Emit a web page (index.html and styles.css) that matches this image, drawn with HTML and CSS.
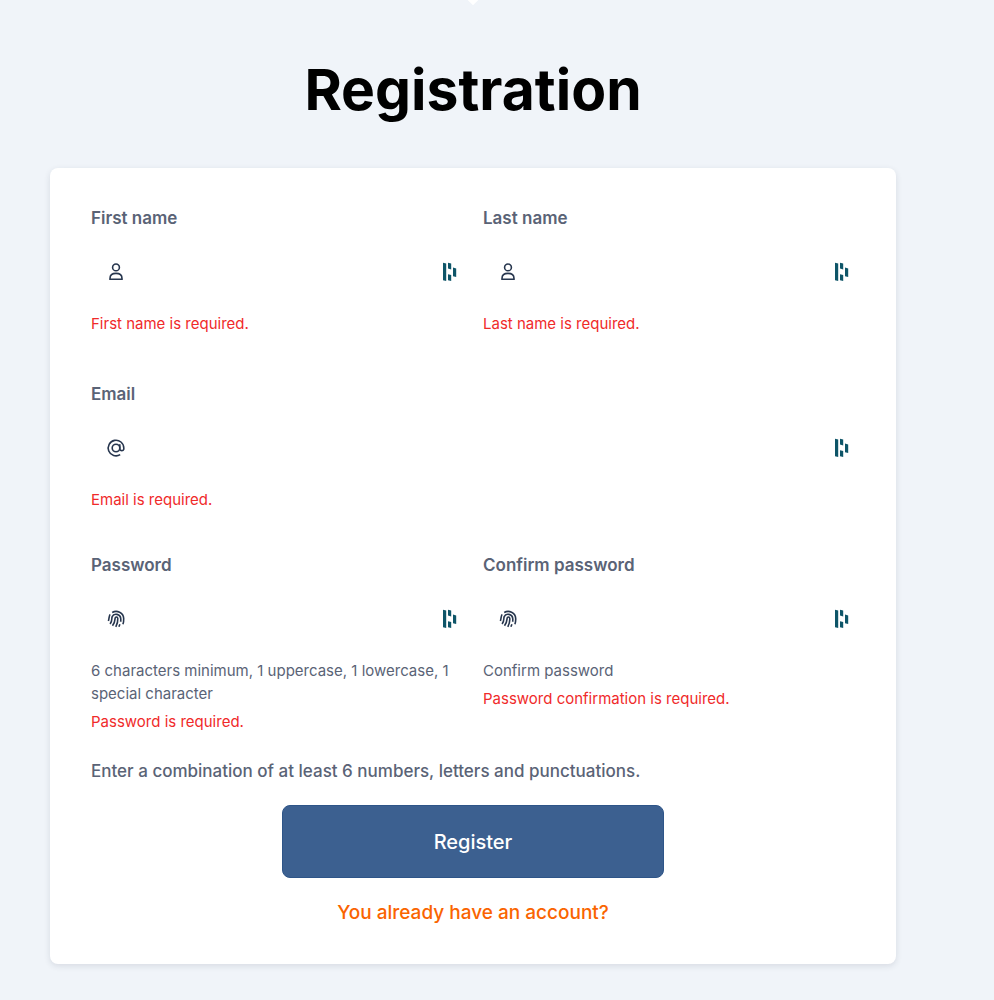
FILE: index.html
```html
<!DOCTYPE html>
<html lang="en">
<head>
<meta charset="utf-8">
<meta name="viewport" content="width=device-width, initial-scale=1">
<title>Registration</title>
<link rel="stylesheet" href="styles.css">
</head>
<body>
<svg class="defs" aria-hidden="true">
  <symbol id="user" viewBox="0 0 20 20"><circle cx="10" cy="5.4" r="3.4"/><path d="M4 17.2V16.4C4 13.2 6.5 11.4 10 11.4S16 13.2 16 16.4V17.2Z"/></symbol>
  <symbol id="at" viewBox="0 0 20 20"><circle cx="10" cy="10" r="3.8"/><path d="M13.8 6.2V11.2A2.1 2.1 0 0 0 17.8 11.2V10A7.8 7.8 0 1 0 14.2 16.6"/></symbol>
  <symbol id="finger" viewBox="0 0 20 20"><path d="M6.2 3.5C10.8 .8 17.5 3.4 17.7 9.6C17.8 12 17.5 13.6 16.9 15.2M4.1 5.3C2.8 7.4 3.3 9.3 2.4 12M4.1 15C6.8 11.2 5.2 10 6.2 7.6C7.8 3.9 14.5 4.6 14.8 10C14.9 11.2 14.8 12 14.6 12.8M6.5 16.8C9 13.5 8.9 11.8 9.1 9.2C9.4 7.6 11.6 7.6 11.8 9.5C12 12.8 11.1 15.4 9.8 17.8M13.9 15.2L12.9 17.8"/></symbol>
  <symbol id="vault" viewBox="0 0 14 20"><path d="M0 .7L3.2 1.5V19L0 18.2ZM5 .7L8.2 1.5V7.4L5 6.6ZM5 12.3L8.2 13.1V19L5 18.2ZM10 5.6L13.2 6.4V15L10 14.2Z"/></symbol>
</svg>
<main class="page">
  <span class="pointer"></span>
  <h1 class="title">Registration</h1>
  <form class="card" novalidate>
    <div class="fields">
      <div class="field">
        <label class="label" for="first">First name</label>
        <div class="control"><svg class="icon"><use href="#user"/></svg><input class="input" id="first" type="text"><svg class="vault"><use href="#vault"/></svg></div>
        <p class="note error">First name is required.</p>
      </div>
      <div class="field">
        <label class="label" for="last">Last name</label>
        <div class="control"><svg class="icon"><use href="#user"/></svg><input class="input" id="last" type="text"><svg class="vault"><use href="#vault"/></svg></div>
        <p class="note error">Last name is required.</p>
      </div>
      <div class="field wide">
        <label class="label" for="email">Email</label>
        <div class="control"><svg class="icon"><use href="#at"/></svg><input class="input" id="email" type="email"><svg class="vault"><use href="#vault"/></svg></div>
        <p class="note error">Email is required.</p>
      </div>
      <div class="field">
        <label class="label" for="password">Password</label>
        <div class="control"><svg class="icon"><use href="#finger"/></svg><input class="input" id="password" type="password"><svg class="vault"><use href="#vault"/></svg></div>
        <p class="note">6 characters minimum, 1 uppercase, 1 lowercase, 1 special character</p>
        <p class="note error">Password is required.</p>
      </div>
      <div class="field">
        <label class="label" for="confirm">Confirm password</label>
        <div class="control"><svg class="icon"><use href="#finger"/></svg><input class="input" id="confirm" type="password"><svg class="vault"><use href="#vault"/></svg></div>
        <p class="note">Confirm password</p>
        <p class="note error">Password confirmation is required.</p>
      </div>
    </div>
    <p class="hint">Enter a combination of at least 6 numbers, letters and punctuations.</p>
    <button class="submit" type="button">Register</button>
    <a class="login" href="#">You already have an account?</a>
  </form>
</main>
</body>
</html>
```
FILE: styles.css
```css
* { box-sizing: border-box; }
body { margin: 0; background: #f0f4f9; color: #5a6376; font-family: Inter, "Liberation Sans", sans-serif; }
.defs { position: absolute; width: 0; height: 0; }
.page { position: relative; padding: 50px 98px 36px 50px; }
.pointer { position: absolute; top: -14px; left: calc(50% - 32px); width: 16px; height: 16px; background: #fff; transform: rotate(45deg); }
.title { margin: 0 0 38px; color: #000; font-size: 57px; line-height: 80px; font-weight: 700; text-align: center; }
.card { display: flex; flex-direction: column; padding: 36px 41px; border-radius: 8px; background: #fff; box-shadow: 0 2px 6px rgba(30, 45, 65, .12); }
.fields { display: grid; grid-template-columns: 1fr 1fr; column-gap: 20px; }
.field { min-width: 0; padding-bottom: 45px; }
.wide { grid-column: 1 / -1; padding-bottom: 40px; }
.label { display: block; font-size: 17px; line-height: 28px; font-weight: 600; }
.control { display: flex; align-items: center; height: 72px; margin: 4px 0; padding: 0 6px 0 15px; }
.input { flex: 1; min-width: 0; height: 48px; padding: 0 12px; border: 0; outline: 0; background: transparent; font: inherit; font-size: 17px; }
.icon { flex: none; width: 20px; height: 20px; fill: none; stroke: #27364e; stroke-width: 1.6; }
.vault { flex: none; width: 14px; height: 20px; fill: #0e5568; }
.note { margin: 0 0 5px; font-size: 15px; line-height: 23px; }
.error { margin: 0; color: #f02a2a; }
.field:nth-last-child(-n+2) { padding-bottom: 24px; }
.hint { margin: 0 0 20px; font-size: 17px; line-height: 28px; font-weight: 500; }
.submit { align-self: center; width: 50%; height: 73px; border: 1px solid #2e5588; border-radius: 8px; background: #3c6090; color: #fff; font: inherit; font-size: 20px; font-weight: 500; }
.login { align-self: center; margin-top: 20px; color: #fa6400; font-size: 19px; line-height: 30px; font-weight: 500; text-decoration: none; }
```
